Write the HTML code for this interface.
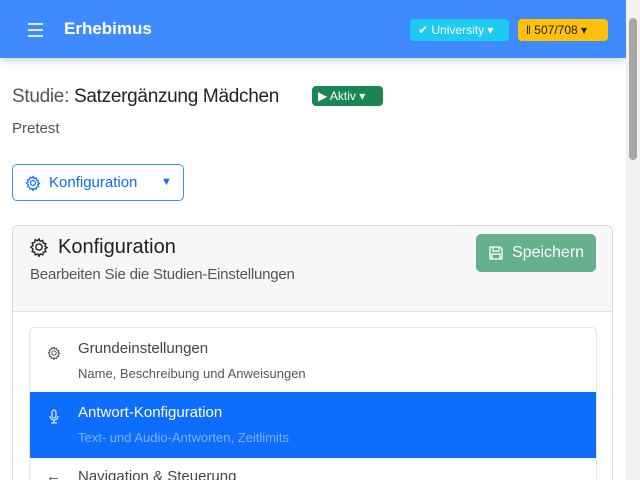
<!DOCTYPE html>
<html style="width:640px;height:480px;overflow:hidden"><head><meta charset="utf-8"><style>
*{box-sizing:border-box;margin:0;padding:0}
body{width:640px;height:480px;overflow:hidden;font-family:"Liberation Sans","DejaVu Sans",sans-serif;background:#fff;position:relative;color:#212529}
.nav{position:absolute;left:0;top:0;width:626px;height:58px;background:#3f8bfd;box-shadow:0 3px 8px rgba(0,0,0,.18)}
.sb{position:absolute;right:0;top:0;width:14px;height:480px;background:#f1f1f1}
.sb .th{position:absolute;left:3px;top:18px;width:8px;height:142px;background:#a8a8a8;border-radius:4px}
.ham{position:absolute;left:28px;top:23px;width:15px}
.ham i{display:block;height:1.5px;background:#dfe9ff;margin-bottom:4.5px}
.brand{position:absolute;left:64px;top:19px;color:#fff;font-weight:bold;font-size:17px}
.b1{position:absolute;left:410px;top:19px;width:99px;height:22px;background:#1dcaf0;border-radius:4px;color:#fff;font-size:12px;line-height:22px;padding-left:8px}
.b2{position:absolute;left:518px;top:19px;width:90px;height:22px;background:#fec107;border-radius:4px;color:#222;font-size:12px;line-height:22px;padding-left:8px}
.h1{position:absolute;left:12px;top:86px;font-size:19px;color:#222;letter-spacing:-.3px}
.h1 span{color:#555}
.akt{position:absolute;left:312px;top:86px;width:71px;height:20px;background:#198754;color:#fff;border-radius:4px;font-size:12px;line-height:20px;padding-left:6px}
.pre{position:absolute;left:12px;top:120px;font-size:15px;color:#555}
.dd{position:absolute;left:12px;top:164px;width:172px;height:37px;border:1px solid #3d8bfd;border-radius:5px;color:#0d6efd;font-size:15px;line-height:35px;padding-left:36px}
.card{position:absolute;left:12px;top:225px;width:601px;height:255px;border:1px solid #dcdcdc;border-bottom:none;border-radius:6px 6px 0 0;background:#fff;overflow:hidden}
.ch{height:86px;background:#f7f7f7;border-bottom:1px solid #e1e1e1;border-radius:6px 6px 0 0;position:relative}
.ct{position:absolute;left:45px;top:10px;font-size:20px;color:#222}
.cs{position:absolute;left:17px;top:40px;font-size:15px;color:#555;letter-spacing:-.2px}
.save{position:absolute;left:463px;top:8px;width:120px;height:38px;background:#66b08e;border-radius:5px;color:#fff;font-size:16px;line-height:38px;padding-left:36px}
.list{position:absolute;left:16px;top:101px;width:568px;height:160px;border:1px solid #e6e6e6;border-bottom:none;border-radius:5px 5px 0 0;overflow:hidden}
.it{position:absolute;left:0;width:568px;height:66px}
.it .t{position:absolute;left:48px;top:12px;font-size:15px;color:#444}
.it .s{position:absolute;left:48px;top:38px;font-size:13px;color:#555}
.act{background:#0d6efd}
.act .t{color:#fff}.act .s{color:#7fb0ff}
</style></head><body>
<div class="nav">
<div class="ham"><i></i><i></i><i></i></div>
<div class="brand">Erhebimus</div>
<div class="b1">✔ University ▾</div>
<div class="b2">ǁ 507/708 ▾</div>
</div>
<div class="sb"><div class="th"></div></div>
<div class="h1"><span>Studie:</span> Satzergänzung Mädchen</div>
<div class="akt">▶ Aktiv ▾</div>
<div class="pre">Pretest</div>
<div class="dd"><svg style="position:absolute;left:12px;top:10px" width="16" height="16" viewBox="0 0 16 16" fill="none" stroke="#0d6efd" stroke-width="1.2"><circle cx="8" cy="8" r="2.5"/><path d="M8 1.5l1 2 2-.8.4 2.1 2.1.5-.8 2 1.8 1.2-1.8 1.2.8 2-2.1.5-.4 2.1-2-.8-1 2-1-2-2 .8-.4-2.1-2.1-.5.8-2L1.5 8l1.8-1.2-.8-2 2.1-.5.4-2.1 2 .8z"/></svg>Konfiguration <span style="position:absolute;left:148px;font-size:11px">▼</span></div>
<div class="card">
<div class="ch">
<svg style="position:absolute;left:16px;top:11px" width="20" height="20" viewBox="0 0 16 16" fill="none" stroke="#222" stroke-width="1.1"><circle cx="8" cy="8" r="2.5"/><path d="M8 1.5l1 2 2-.8.4 2.1 2.1.5-.8 2 1.8 1.2-1.8 1.2.8 2-2.1.5-.4 2.1-2-.8-1 2-1-2-2 .8-.4-2.1-2.1-.5.8-2L1.5 8l1.8-1.2-.8-2 2.1-.5.4-2.1 2 .8z"/></svg>
<div class="ct">Konfiguration</div>
<div class="cs">Bearbeiten Sie die Studien-Einstellungen</div>
<div class="save"><svg style="position:absolute;left:12px;top:11px" width="16" height="16" viewBox="0 0 16 16" fill="none" stroke="#fff" stroke-width="1.3"><path d="M2 2h10l2 2v10H2z M5 2v4h6V2 M4 14V9h8v5"/></svg>Speichern</div>
</div>
<div class="list">
<div class="it" style="top:0"><svg style="position:absolute;left:17px;top:18px" width="14" height="14" viewBox="0 0 16 16" fill="none" stroke="#444" stroke-width="1.1"><circle cx="8" cy="8" r="2.5"/><path d="M8 1.5l1 2 2-.8.4 2.1 2.1.5-.8 2 1.8 1.2-1.8 1.2.8 2-2.1.5-.4 2.1-2-.8-1 2-1-2-2 .8-.4-2.1-2.1-.5.8-2L1.5 8l1.8-1.2-.8-2 2.1-.5.4-2.1 2 .8z"/></svg><div class="t">Grundeinstellungen</div><div class="s">Name, Beschreibung und Anweisungen</div></div>
<div class="it act" style="top:64px"><svg style="position:absolute;left:17px;top:17px" width="14" height="16" viewBox="0 0 14 16" fill="none" stroke="#fff" stroke-width="1.1"><rect x="5" y="1" width="4" height="8" rx="2"/><path d="M3 7a4 4 0 0 0 8 0M7 11v3M4 14h6"/></svg><div class="t">Antwort-Konfiguration</div><div class="s">Text- und Audio-Antworten, Zeitlimits</div></div>
<div class="it" style="top:130px;height:30px"><div style="position:absolute;left:16px;top:10px;color:#444;font-size:15px">←</div><div class="t" style="top:10px">Navigation &amp; Steuerung</div></div>
</div>
</div>
</body></html>
